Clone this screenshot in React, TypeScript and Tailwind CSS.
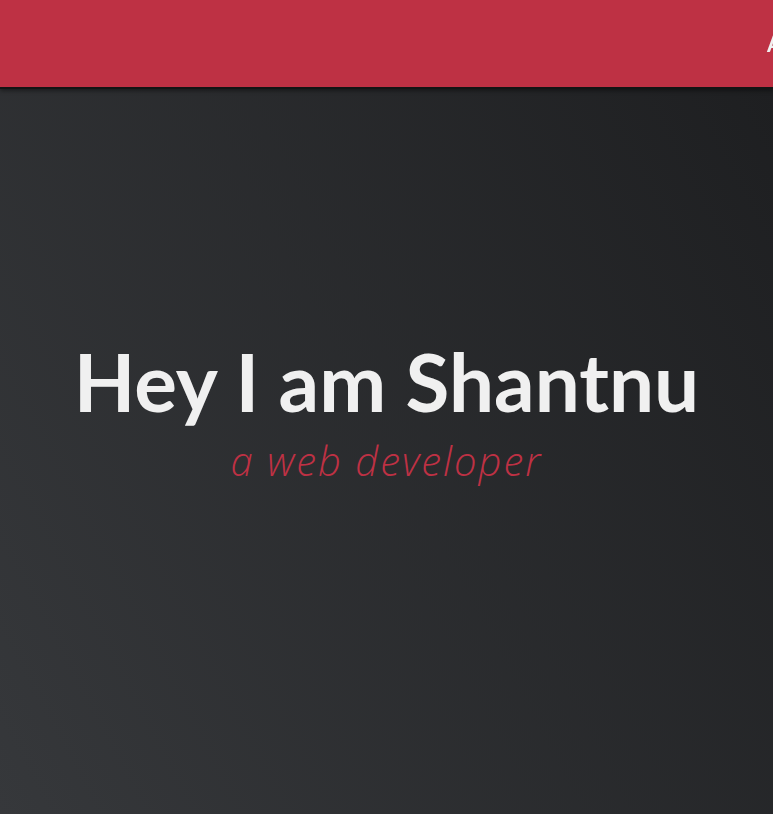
import React from "react";

const links = ["About", "Work", "Contact"];

const App = () => {
  return (
    <div className="relative w-full overflow-hidden font-['Lato','Liberation_Sans',sans-serif]">
      <nav className="fixed top-0 left-0 z-10 flex h-[89px] w-full items-center overflow-hidden border-b-2 border-[#141414] bg-[#be3144] shadow-[0_2px_4px_rgba(0,0,0,0.4)]">
        <ul className="ml-[767px] flex shrink-0 gap-8">
          {links.map((link) => (
            <li key={link}>
              <a href="#" className="text-[22px] font-bold text-[#f0f0f0]">
                {link}
              </a>
            </li>
          ))}
        </ul>
      </nav>

      <section className="flex h-[814px] w-full flex-col items-center justify-center bg-[linear-gradient(62deg,#36383b,#1d1e20)] pt-[8px]">
        <h1 className="text-[80px] leading-none font-bold text-[#f0f0f0]">
          Hey I am Shantnu
        </h1>
        <p className="mt-[20px] font-['Open_Sans','Liberation_Sans',sans-serif] text-[40px] leading-none font-light tracking-[2px] italic text-[#be3144]">
          a web developer
        </p>
      </section>
    </div>
  );
};

export default App;
